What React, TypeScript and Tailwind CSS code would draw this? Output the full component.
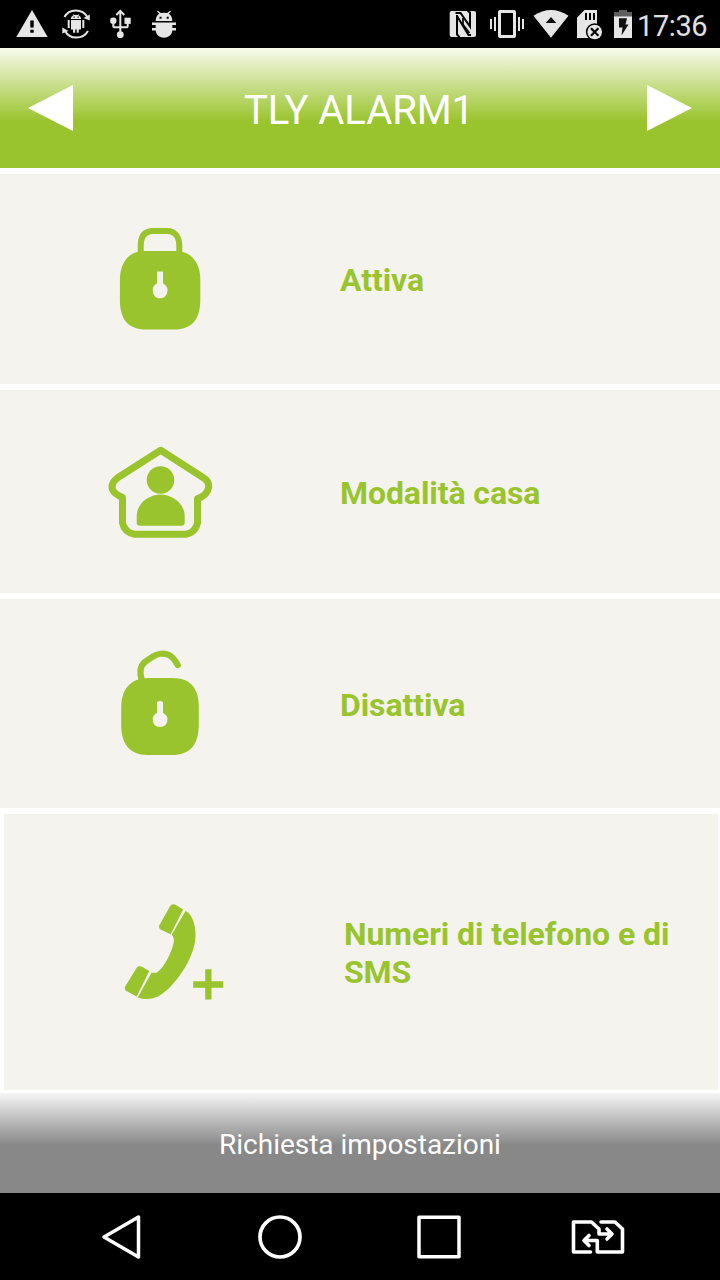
import React from "react";

const GREEN = "#9ac42d";
const PAPER = "#f4f3ee";
const LIGHT = "#e6e6e6";

type IconProps = { box: string; className: string; children: React.ReactNode };

function Icon({ box, className, children }: IconProps) {
  return (
    <svg viewBox={box} className={`shrink-0 ${className}`} fill="none" aria-hidden="true">
      {children}
    </svg>
  );
}

function StatusBar() {
  return (
    <div className="flex h-12 items-center bg-black pl-2.5 pr-3">
      <Icon box="10 0 44 48" className="h-12 w-11">
        <path fill={LIGHT} fillRule="evenodd" d="M32 10L47.700 37H16.300ZM30.300 20.500V27.500H33.700V20.500ZM30.300 29.700V32.700H33.700V29.700Z" />
      </Icon>
      <Icon box="54 0 44 48" className="h-12 w-11">
        <path stroke={LIGHT} strokeWidth="2" d="M64.500 17C69 8.500 82 8 87.500 17M88 31C83 39.500 70 40 65 31" />
        <path fill={LIGHT} d="M89.800 14.500V20.500L83.500 18ZM62.300 27.500V33.500L68.500 31Z" />
        <path fill={LIGHT} d="M70.800 19C71 16.800 72.300 15.700 73.500 15.200L72.500 13.800L74.300 15H77.700L79.500 13.800L78.500 15.200C80 16 81 17 81.200 19ZM71 20H81V29.500H78.800V32.700H76.700V29.500H75.200V32.700H73V29.500H71ZM67.700 20H69.700V28H67.700ZM82.300 20H84.300V28H82.300Z" />
        <path fill="#000" d="M73.500 16.600h1.200v1.200h-1.200zM77.500 16.600h1.200v1.200h-1.200z" />
      </Icon>
      <Icon box="98 0 44 48" className="h-12 w-11">
        <path stroke={LIGHT} strokeWidth="2" d="M120.300 12V34M113.300 21V26Q113.300 27.300 115 27.300H126Q127.700 27.300 127.700 26V21" />
        <path stroke={LIGHT} strokeWidth="2" d="M116.300 15L120.300 11L124.300 15" />
        <circle cx="113.300" cy="20.700" r="3.200" fill={LIGHT} />
        <path fill={LIGHT} d="M124.500 17.700h6.200v6.200h-6.200z" />
        <circle cx="120.300" cy="34.700" r="3.400" fill={LIGHT} />
      </Icon>
      <Icon box="142 0 44 48" className="h-12 w-11">
        <path fill={LIGHT} d="M155.700 21C155.700 17.300 157.200 15 159.200 13.800L157 11.600L158 10.700L160.700 13.100Q164 12.200 167.200 13.100L170 10.700L171 11.600L168.800 13.800C171 15 172.300 17.500 172.300 21ZM155.700 22.500H172.300V30C172.300 35 168 37.700 164 37.700C160 37.700 155.700 35 155.700 30ZM152 22.500h5v2.600h-5zM171 22.500h5v2.600h-5zM152 28h5v2.400h-5zM171 28h5v2.400h-5z" />
        <path fill="#000" d="M159.500 16.800h2v2h-2zM166.700 16.800h2v2h-2z" />
      </Icon>
      <div className="flex-1" />
      <Icon box="445 0 38 48" className="h-12 w-[38px]">
        <rect x="449.700" y="11" width="26.300" height="26" rx="2" fill={LIGHT} />
        <path stroke="#000" strokeWidth="2" d="M455.500 13H460.500L470 26.500V12.500L467.500 11M457 15V34.500L459.500 37M457 16L468.500 35H471" />
        <path stroke="#000" strokeWidth="1.700" d="M463 18V24.500L469.500 33" />
      </Icon>
      <Icon box="483 0 47 48" className="h-12 w-[47px]">
        <rect x="499.500" y="11.500" width="15" height="25" rx="0.500" stroke={LIGHT} strokeWidth="3" />
        <path stroke={LIGHT} strokeWidth="2" d="M491 19V29M495 17V31M519 17V31M523 19V29" />
      </Icon>
      <Icon box="530 0 42 48" className="h-12 w-[42px]">
        <path fill={LIGHT} d="M533.500 15.800Q551 4 568.500 15.800L551 37.700Z" />
        <path fill="#111" d="M551 17L556.300 23H545.700Z" />
      </Icon>
      <Icon box="572 0 36 48" className="h-12 w-9">
        <path fill={LIGHT} d="M584.500 10H597V38H577V17.500Z" />
        <path fill="#000" d="M585 13h2v7h-2zM589 13h2v7h-2zM593 13h2v7h-2z" />
        <circle cx="594.700" cy="32" r="8.800" fill="#000" />
        <circle cx="594.700" cy="32" r="7.300" fill={LIGHT} />
        <path stroke="#000" strokeWidth="2.200" d="M591 28.300L598.400 35.700M598.400 28.300L591 35.700" />
      </Icon>
      <Icon box="608 0 29 48" className="h-12 w-[29px]">
        <path fill="#5e5e5e" d="M619 10h8v2h5v4.300h-18V12h5z" />
        <path fill={LIGHT} d="M614 16.300h18V38h-18z" />
        <path fill="#111" d="M619 18.300h8L625.500 24.500H628.500L621.500 35.500L622.500 27.500H619z" />
      </Icon>
      <span className="w-[71px] whitespace-nowrap pt-[3px] text-[29px] leading-[34px] tracking-[-0.4px] text-[#e0e0e0]">17:36</span>
    </div>
  );
}

function Header() {
  return (
    <header className="flex h-[120px] items-center justify-between bg-[linear-gradient(to_bottom,#f8faec_0%,#9ac42d_61%,#9ac42d_100%)] px-7">
      <button aria-label="Precedente">
        <Icon box="28 85 45 46" className="h-[46px] w-[45px]">
          <path fill="#fff" d="M28 108L73 85V131Z" />
        </Icon>
      </button>
      <h1 className="pr-0.5 pt-1 text-[40px] leading-[47px] tracking-[-0.1px] text-white">TLY ALARM1</h1>
      <button aria-label="Successivo">
        <Icon box="647 85 45 46" className="h-[46px] w-[45px]">
          <path fill="#fff" d="M692 108L647 85V131Z" />
        </Icon>
      </button>
    </header>
  );
}

function LockIcon() {
  return (
    <Icon box="100 219 120 120" className="size-[120px]">
      <path stroke={GREEN} strokeWidth="6" d="M140.700 254V246C140.700 236 145 231 153 231H167C175 231 179.300 237 179.300 246V254" />
      <path fill={GREEN} d="M145 251H175C191 251 200.300 262 200.300 280V300C200.300 319 192 329.500 174 329.500H146C128 329.500 119.900 319 119.900 300V280C119.900 262 129 251 145 251Z" />
      <path fill={PAPER} d="M157 271.500h6v11.700C166 285 167.500 287 167.500 290C167.500 295 164.500 298.300 160 298.300C155.500 298.300 152.700 295 152.700 290C152.700 287 154 285 157 283.200Z" />
    </Icon>
  );
}

function HomeIcon() {
  return (
    <Icon box="100 432 120 120" className="size-[120px]">
      <path stroke={GREEN} strokeWidth="7" strokeLinejoin="round" d="M160.700 450.200L118 477.500Q110.500 483 112.500 489.500Q114.300 494 122.500 497.500V523Q124.500 532 134 534.200H186.500Q195.500 532 197.500 523V498.500Q207.500 495.500 208.700 487Q209 481 203 477.500Z" />
      <circle cx="160.500" cy="480" r="13.800" fill={GREEN} />
      <path fill={GREEN} d="M153.500 495.500Q160.500 493.500 167.500 495.500C178 499 184.700 507 184.700 516V522.500Q184.700 525.700 181.500 525.700H140Q136.700 525.700 136.700 522.500V516C136.700 507 143 499 153.500 495.500Z" />
    </Icon>
  );
}

function UnlockIcon() {
  return (
    <Icon box="100 644 120 120" className="size-[120px]">
      <path stroke={GREEN} strokeWidth="6.300" strokeLinecap="round" d="M142 682L140.500 674Q139.500 664 148.500 659.500C158 652.500 163.500 652.500 169 655C173 657 175.500 661 177.700 665" />
      <path fill={GREEN} d="M148 678H173C191 678 198.800 689 198.800 707V724C198.800 745 190 755 172 755H147C130 755 121.200 744 121.200 725V707C121.200 689 131 678 148 678Z" />
      <path fill={PAPER} d="M157 703Q157 701 160 701Q163 701 163 703V712.700C166 714.500 167.500 716.500 167.500 719C167.500 724 164.500 727 160 727C155.500 727 152.700 724 152.700 719C152.700 716.500 154 714.500 157 712.700Z" />
    </Icon>
  );
}

function PhoneAddIcon() {
  return (
    <Icon box="104 892 120 120" className="size-[120px]">
      <path fill={GREEN} d="M170.300 905.700Q172 903.500 175 904.500L183.200 909.500L170.700 934.300L160.500 929.500Q158.300 928 159.200 925.500ZM137 967.200Q138.500 965.500 141.500 966.500L149.300 971L136.700 996.500L126.500 991Q124 989.500 125.200 986.500Z" />
      <path fill={GREEN} d="M185.500 911C193 914 196 927 195.500 937C194.500 959 173.500 988.500 158 996.500Q148 1001 137.700 997.500L151.500 972.700H156.500C164 969 173.500 949 174 940Q174 937 171.700 934.700Z" />
      <path fill={GREEN} d="M205.200 969.200h6.300v12h11.800v6.500h-11.800v11.800h-6.300v-11.800h-12v-6.500h12z" />
    </Icon>
  );
}

const rowBase = "flex items-center bg-[#f4f3ee] pl-[100px] text-left";
const labelBase = "pt-0.5 text-[32px] leading-[38px] font-bold tracking-[-0.08px] text-[#9ac42d]";

function App() {
  return (
    <main className="flex h-[1280px] w-[720px] flex-col bg-white font-[Roboto,sans-serif]">
      <StatusBar />
      <Header />
      <nav className="flex flex-col gap-1.5 pt-1.5">
        <button className={`${rowBase} h-[210px] gap-[120px]`}>
          <LockIcon />
          <span className={labelBase}>Attiva</span>
        </button>
        <button className={`${rowBase} h-[203px] gap-[120px]`}>
          <HomeIcon />
          <span className={labelBase}>Modalità casa</span>
        </button>
        <button className={`${rowBase} h-[209px] gap-[120px]`}>
          <UnlockIcon />
          <span className={labelBase}>Disattiva</span>
        </button>
        <button className={`${rowBase} ml-1 mr-0.5 h-[276px] gap-[120px]`}>
          <PhoneAddIcon />
          <span className={`${labelBase} w-[340px]`}>Numeri di telefono e di SMS</span>
        </button>
      </nav>
      <button className="mt-[3px] flex h-[100px] items-center justify-center bg-[linear-gradient(to_bottom,#f5f5f5_0%,#888888_52%,#888888_100%)] pt-0.5 text-[28px] leading-[33px] tracking-[-0.03px] text-white">
        Richiesta impostazioni
      </button>
      <footer className="flex h-[87px] items-center bg-black pl-[100px]">
        <Icon box="100 1193 158 87" className="h-[87px] w-[158px]">
          <path stroke="#fff" strokeWidth="3.500" strokeLinejoin="round" d="M104 1237L138.500 1217V1257Z" />
        </Icon>
        <Icon box="258 1193 158 87" className="h-[87px] w-[158px]">
          <circle cx="280" cy="1237" r="20" stroke="#fff" strokeWidth="3.700" />
        </Icon>
        <Icon box="416 1193 154 87" className="h-[87px] w-[154px]">
          <path stroke="#fff" strokeWidth="3.500" strokeLinejoin="round" d="M419 1217.200H459V1256.800H419Z" />
        </Icon>
        <Icon box="570 1193 60 87" className="h-[87px] w-[60px]">
          <path stroke="#fff" strokeWidth="3.600" strokeLinecap="round" strokeLinejoin="round" d="M590.500 1252H573.500V1222H591.500L599 1229V1234H611M607 1229L612 1234L607 1239M601 1222H615L622.500 1229V1252H597.300V1240.500H585M589 1235.500L584 1240.500L589 1245.500" />
        </Icon>
      </footer>
    </main>
  );
}

export default App;
